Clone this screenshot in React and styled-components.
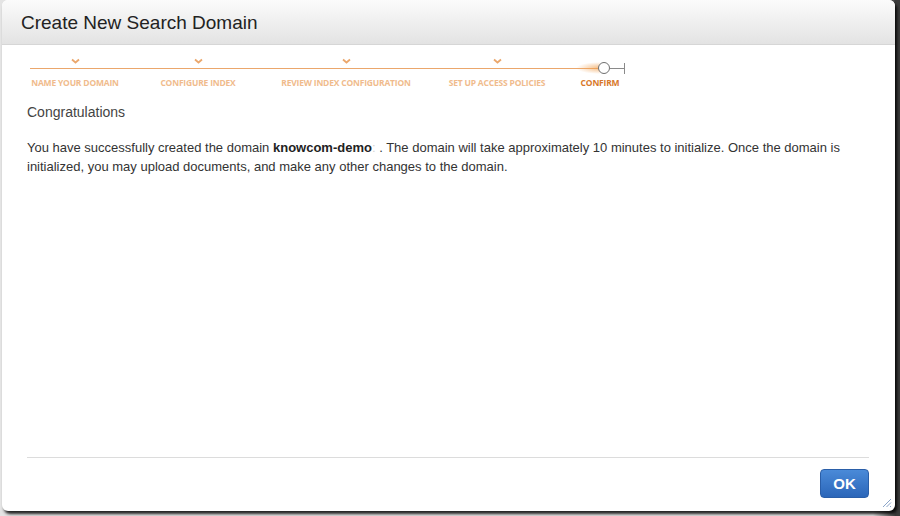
import React from "react";
import styled, { createGlobalStyle } from "styled-components";

const Global = createGlobalStyle`
  html, body {
    margin: 0;
    padding: 0;
    background: #d8d8d8;
    width: 900px;
    height: 516px;
    overflow: hidden;
  }
  body {
    font-family: "Liberation Sans", Arial, sans-serif;
  }
`;

// width = slot each step takes on the track, label sits centred in it
const steps = [
  { label: "NAME YOUR DOMAIN", width: 88, done: true },
  { label: "CONFIGURE INDEX", width: 158, done: true },
  { label: "REVIEW INDEX CONFIGURATION", width: 138, done: true },
  { label: "SET UP ACCESS POLICIES", width: 164, done: true },
  { label: "CONFIRM", width: 42, current: true },
];

const App = () => {
  return (
    <>
      <Global />
      <Backdrop>
        <Dialog>
          <Header>
            <Title>Create New Search Domain</Title>
          </Header>
          <Stepper>
            <Track>
              {steps.map((s) => (
                <Step key={s.label} $width={s.width}>
                  <Marker>
                    {s.done && (
                      <svg width="9" height="7" viewBox="0 0 9 7">
                        <path
                          d="M1 2.5 L4.5 5.5 L8 2.5"
                          fill="none"
                          stroke="#eba76c"
                          strokeWidth="1.8"
                        />
                      </svg>
                    )}
                  </Marker>
                  <StepLabel $current={s.current}>{s.label}</StepLabel>
                </Step>
              ))}
            </Track>
            <Progress>
              <DoneLine />
              <Glow />
              <Circle />
              <RestLine />
              <EndTick />
            </Progress>
          </Stepper>
          <Content>
            <Heading>Congratulations</Heading>
            <Message>
              You have successfully created the domain{" "}
              <b>
                knowcom-demo<Faint>:</Faint>
              </b>{" "}
              . The domain will take approximately 10 minutes to initialize.
              Once the domain is initialized, you may upload documents, and
              make any other changes to the domain.
            </Message>
          </Content>
          <Footer>
            <OkButton>OK</OkButton>
          </Footer>
          <Grip>
            <svg width="10" height="10" viewBox="0 0 10 10">
              <path
                d="M1 9 L9 1 M4.5 9 L9 4.5 M8 9 L9 8"
                stroke="#8aa4c8"
                strokeWidth="1"
              />
            </svg>
          </Grip>
        </Dialog>
      </Backdrop>
    </>
  );
};

const Backdrop = styled.div`
  width: 900px;
  height: 516px;
  padding: 0 0 0 2px;
  box-sizing: border-box;
  background: linear-gradient(90deg, #e4e4e4 0%, #e4e4e4 97%, #3a3a3a 99.5%);
`;

const Dialog = styled.div`
  position: relative;
  width: 893px;
  height: 511px;
  background: #fff;
  border-radius: 6px;
  box-shadow: 2px 3px 3px rgba(0, 0, 0, 0.85);
  display: flex;
  flex-direction: column;
`;

const Header = styled.div`
  height: 45px;
  border-radius: 6px 6px 0 0;
  background: linear-gradient(#fbfbfb, #e3e3e3);
  border-bottom: 1px solid #d6d6d6;
  display: flex;
  align-items: center;
  padding-left: 19px;
  box-sizing: border-box;
`;

const Title = styled.h1`
  margin: 0;
  font-weight: normal;
  font-size: 19px;
  color: #222;
  font-family: "Liberation Sans", Arial, sans-serif;
  padding-top: 1px;
`;

const Stepper = styled.div`
  position: relative;
  padding: 12px 0 0 29px;
  height: 58px;
  box-sizing: border-box;
`;

const Track = styled.div`
  display: flex;
`;

const Step = styled.div`
  width: ${(p) => p.$width}px;
  display: flex;
  flex-direction: column;
  align-items: center;
`;

const Marker = styled.div`
  height: 7px;
  display: flex;
  align-items: flex-end;
  margin-bottom: 13px;
`;

const StepLabel = styled.div`
  font-family: "Open Sans", sans-serif;
  font-weight: 700;
  font-size: 8.5px;
  letter-spacing: -0.2px;
  white-space: nowrap;
  color: ${(p) => (p.$current ? "#d8782a" : "#f0bb8c")};
`;

const Progress = styled.div`
  position: absolute;
  left: 28px;
  top: 17px;
  display: flex;
  align-items: center;
  height: 12px;
`;

const DoneLine = styled.div`
  width: 568px;
  height: 1px;
  background: #eba76c;
`;

const Glow = styled.div`
  position: absolute;
  left: 546px;
  top: 0;
  width: 24px;
  height: 12px;
  background: radial-gradient(
    ellipse at right center,
    rgba(240, 160, 80, 0.7),
    rgba(240, 160, 80, 0) 70%
  );
`;

const Circle = styled.div`
  position: relative;
  width: 12px;
  height: 12px;
  border: 1.5px solid #6f6f6f;
  border-radius: 50%;
  background: #fff;
  box-sizing: border-box;
`;

const RestLine = styled.div`
  width: 14px;
  height: 1px;
  background: #8a8a8a;
`;

const EndTick = styled.div`
  width: 1px;
  height: 11px;
  background: #8a8a8a;
`;

const Content = styled.div`
  flex: 1;
  padding: 0 25px;
`;

const Heading = styled.div`
  font-size: 14px;
  color: #444;
  line-height: 18px;
`;

const Message = styled.p`
  margin: 17px 0 0;
  font-size: 13px;
  line-height: 19px;
  color: #333;
  b {
    color: #222;
  }
`;

const Faint = styled.span`
  color: #d4d4d4;
  font-weight: normal;
`;

const Footer = styled.div`
  margin: 0 26px 0 25px;
  border-top: 1px solid #dcdcdc;
  height: 54px;
  box-sizing: border-box;
  display: flex;
  justify-content: flex-end;
  align-items: flex-start;
  padding-top: 11px;
`;

const OkButton = styled.button`
  width: 49px;
  height: 29px;
  border: 1px solid #2a5ea8;
  border-radius: 4px;
  background: linear-gradient(#4a8ad8, #2b66b9);
  color: #fff;
  font-family: "Liberation Sans", Arial, sans-serif;
  font-weight: bold;
  font-size: 15px;
  padding: 0;
  cursor: pointer;
`;

const Grip = styled.div`
  position: absolute;
  right: 3px;
  bottom: 3px;
  width: 10px;
  height: 10px;
  line-height: 0;
`;

export default App;
